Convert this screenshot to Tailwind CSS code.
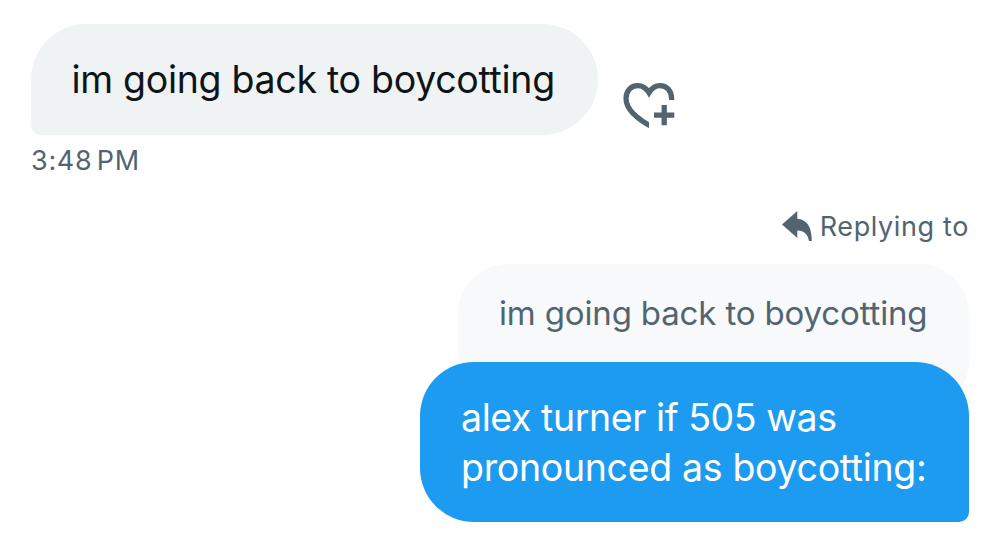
<!DOCTYPE html>
<html lang="en">
<head>
  <meta charset="UTF-8">
  <meta name="viewport" content="width=device-width, initial-scale=1.0">
  <title>Messages</title>
  <script src="https://cdn.jsdelivr.net/npm/@tailwindcss/browser@4"></script>
</head>
<body class="bg-white font-['Inter',sans-serif] h-[535px] overflow-hidden">
<main class="flex flex-col pl-[31px] pr-[31px] pt-6">

  <!-- Received message -->
  <div class="flex items-start h-[111px]">
    <div class="w-[567px] h-[111px] pl-[40.5px] pt-[30.5px] bg-[#eff3f4] rounded-[56px] rounded-bl-[10px]">
      <p class="text-[37.5px] leading-[50px] tracking-[-0.3px] text-[#0f1419] whitespace-nowrap">im going back to boycotting</p>
    </div>
    <button type="button" aria-label="Add reaction" class="mt-[46px] ml-3 text-[#536471]">
      <svg class="w-20 h-[70px]" viewBox="0 0 80 70" fill="none" stroke="currentColor" stroke-width="5.3">
        <clipPath id="heartCut"><path d="M0 0H80V30H39V70H0Z"/></clipPath>
        <path clip-path="url(#heartCut)" d="M44 58C24 47.5 16 37.5 16 28.5C16 21 21 15.7 27.5 15.7C32.5 15.7 36.3 18.3 39 22.7C41.7 18.3 45.5 15.7 50 15.7C56.8 15.7 61.6 21 61.6 28.5V31"/>
        <path d="M54.2 35V55.2M44 45.2H64.3"/>
      </svg>
    </button>
  </div>
  <time class="mt-[8px] h-7 text-[27px] leading-9 tracking-[0.7px] [word-spacing:-4px] text-[#536471] whitespace-nowrap">3:48 PM</time>

  <!-- Sent reply -->
  <div class="flex flex-col items-end mt-[38px]">
    <div class="flex items-center h-9 text-[#536471]">
      <svg class="w-[30px] h-[31px] mr-[8px] -mt-[2px]" viewBox="0 0 30 31" fill="currentColor">
        <path d="M0 13.6L15.3 0V7.7C24.5 8.5 29.8 15 29.8 30H27C26 23.5 22.5 19.8 15.3 19.5V27Z"/>
      </svg>
      <span class="text-[27px] leading-9 tracking-[0.62px] whitespace-nowrap">Replying to</span>
    </div>
    <div class="w-[511px] h-[147px] mt-[19px] pl-[41px] pt-[27px] bg-[#f7f9fa] rounded-[50px]">
      <p class="text-[33px] leading-[44px] tracking-[-0.15px] text-[#536471] whitespace-nowrap">im going back to boycotting</p>
    </div>
    <div class="relative w-[549px] h-[160px] -mt-[49px] pl-[41px] pt-[31px] bg-[#1d9bf0] rounded-[54px] rounded-br-[10px]">
      <p class="text-[37.5px] leading-[49.5px] tracking-[-0.33px] text-white whitespace-nowrap"><span class="tracking-[-0.42px]">alex turner if 505 was</span><br>pronounced as boycotting:</p>
    </div>
  </div>

</main>
</body>
</html>
